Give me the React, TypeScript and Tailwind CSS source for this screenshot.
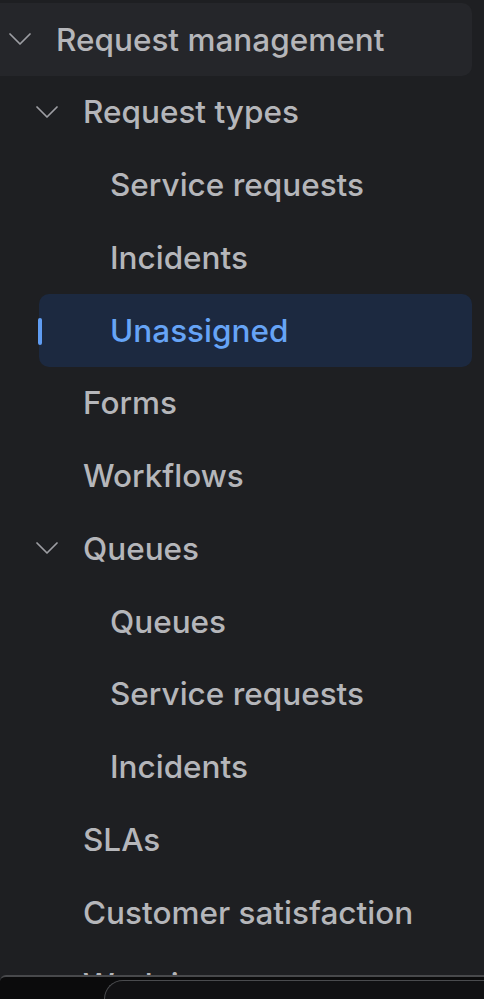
import React from "react";

type Item = {
  label: string;
  level: number;
  chevron?: boolean;
  hover?: boolean;
  selected?: boolean;
};

const ITEMS: Item[] = [
  { label: "Request management", level: 0, chevron: true, hover: true },
  { label: "Request types", level: 1, chevron: true },
  { label: "Service requests", level: 2 },
  { label: "Incidents", level: 2 },
  { label: "Unassigned", level: 2, selected: true },
  { label: "Forms", level: 1 },
  { label: "Workflows", level: 1 },
  { label: "Queues", level: 1, chevron: true },
  { label: "Queues", level: 2 },
  { label: "Service requests", level: 2 },
  { label: "Incidents", level: 2 },
  { label: "SLAs", level: 1 },
  { label: "Customer satisfaction", level: 1 },
  { label: "Work item types", level: 1 },
];

const indentPad = ["pl-[56px]", "pl-[83px]", "pl-[110px]"];
const chevronLeft = ["left-[9px]", "left-[36px]", "left-[63px]"];

function Chevron() {
  return (
    <svg width="22" height="12" viewBox="0 0 22 12" fill="none">
      <polyline
        points="1,1 11,11 21,1"
        stroke="#9d9ea3"
        strokeWidth="1.7"
        strokeLinecap="round"
        strokeLinejoin="round"
      />
    </svg>
  );
}

function Row({ item }: { item: Item }) {
  const rowBg = item.selected
    ? "bg-[#1c2940] ml-[39px] rounded-[10px]"
    : item.hover
      ? "bg-[#25262a] rounded-r-[10px]"
      : "";
  return (
    <div className="relative h-[72.75px] pr-3 flex">
      <div className={`flex-1 flex items-center ${rowBg}`}>
        {item.selected && (
          <span className="absolute left-[38px] top-[24px] w-[4px] h-[27px] rounded-sm bg-[#5f9cf2]" />
        )}
        {item.chevron && (
          <span className={`absolute ${chevronLeft[item.level]} top-[30px] flex`}>
            <Chevron />
          </span>
        )}
        <span
          className={`${item.selected ? "pl-[71px] text-[#66a4f6]" : `${indentPad[item.level]} text-[#b5b6ba]`} text-[31.5px] font-medium whitespace-nowrap leading-none`}
        >
          {item.label}
        </span>
      </div>
    </div>
  );
}

export default function App() {
  return (
    <div
      className="w-[484px] h-[999px] overflow-hidden flex flex-col bg-[#1e1f22]"
      style={{ fontFamily: "Inter, 'Noto Sans', sans-serif" }}
    >
      <div className="h-[975px] overflow-hidden pt-[3px]">
        {ITEMS.map((it, i) => (
          <Row key={i} item={it} />
        ))}
      </div>
      <div className="flex-1 bg-[#0b0b0c] border-t-2 border-[#48494c] rounded-tl-[6px] flex flex-col justify-end">
        <div className="h-[19px] ml-[104px] rounded-tl-[44px] border-t border-l border-[#4a4b4e] bg-[#111113]" />
      </div>
    </div>
  );
}
